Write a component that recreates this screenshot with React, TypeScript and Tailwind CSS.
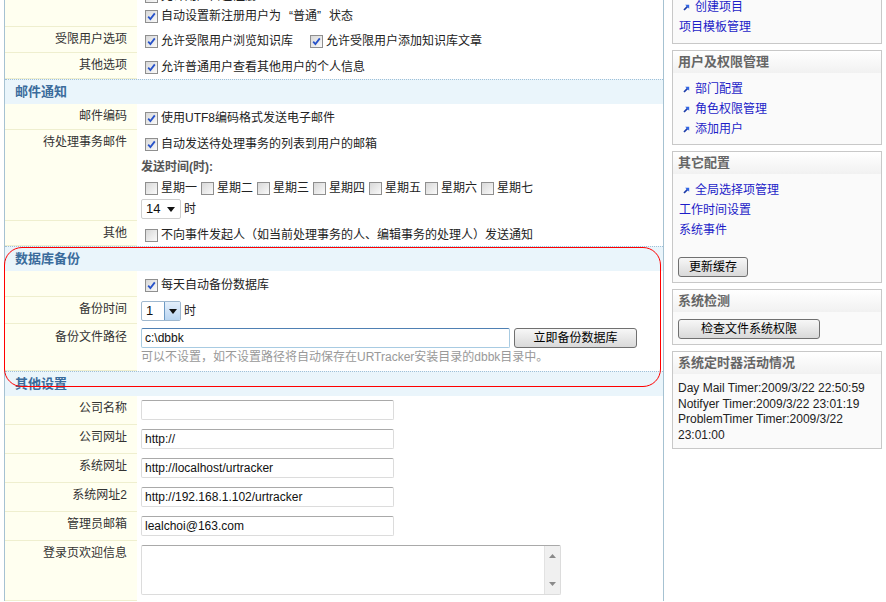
import React from 'react';

const Check = ({ checked }: { checked?: boolean }) => (
  <span className="inline-flex w-[13px] h-[13px] shrink-0 items-center justify-center border border-[#8f8f8f] bg-linear-to-br from-[#d8d8d8] to-[#fafafa]">
    {checked && (
      <svg width="9" height="9" viewBox="0 0 9 9">
        <path d="M1.2 4.6 L3.4 7 L7.8 1.4" fill="none" stroke="#2752c9" strokeWidth="1.8" />
      </svg>
    )}
  </span>
);

const CheckLine = ({ checked, children, className = 'ml-[4px]' }: { checked?: boolean; children: React.ReactNode; className?: string }) => (
  <div className={`flex w-fit items-center gap-[3px] leading-[20px] h-[20px] ${className}`}>
    <Check checked={checked} />
    <span>{children}</span>
  </div>
);

const Row = ({ label, children, valueClass = 'pt-[4px] pb-[2px]', labelPad = 'pt-[3px]' }: { label?: string; children: React.ReactNode; valueClass?: string; labelPad?: string }) => (
  <div className="flex">
    <div className={`w-[132px] shrink-0 bg-[#fffff0] border-b border-[#efefcf] text-right pr-[10px] leading-[19px] text-[#333] ${labelPad}`}>{label}</div>
    <div className={`flex-1 pl-[4px] ${valueClass}`}>{children}</div>
  </div>
);

const Section = ({ title }: { title: string }) => (
  <div className="h-[25px] border-t border-dotted border-[#9fc0d8] bg-[#eaf5fb] pl-[10px] flex items-center font-bold text-[13px] text-[#3b6c9c]">{title}</div>
);

const TextBox = ({ value = '', w = 'w-[253px]' }: { value?: string; w?: string }) => (
  <input
    readOnly
    value={value}
    className={`${w} h-[20px] block rounded-[2px] border border-[#dcdcdc] border-t-[#a9a9a9] px-[3px] text-[12px] text-[#111] outline-none font-['Liberation_Sans',sans-serif]`}
  />
);

const Btn = ({ children, w }: { children: React.ReactNode; w: string }) => (
  <button className={`${w} h-[20px] block rounded-[3px] border border-[#707070] bg-linear-to-b from-[#f7f7f7] to-[#d9d9d9] text-[12px] leading-[18px] text-black`}>{children}</button>
);

const Bullet = () => (
  <svg width="7" height="7" viewBox="0 0 7 7" className="shrink-0">
    <path d="M1 6 L4.6 2.4" stroke="#1b3aa8" strokeWidth="1.7" />
    <path d="M2.2 0.8 H6.2 V4.8 Z" fill="#2e64e6" />
  </svg>
);

const Link = ({ bullet, children }: { bullet?: boolean; children: React.ReactNode }) => (
  <div className={`flex items-center h-[20px] leading-[20px] text-[#1d1dc8] ${bullet ? 'pl-[10px] gap-[5px]' : 'pl-[6px]'}`}>
    {bullet && <Bullet />}
    <span>{children}</span>
  </div>
);

const Panel = ({ title, children, bodyClass = 'pt-[6px] pb-[5px]' }: { title?: string; children: React.ReactNode; bodyClass?: string }) => (
  <div className="border border-[#c8c8c8] bg-[#fafafa]">
    {title && (
      <div className="h-[22px] flex items-center pl-[5px] bg-linear-to-b from-white to-[#f1f1f1] font-bold text-[13px] text-[#666]">{title}</div>
    )}
    <div className={bodyClass}>{children}</div>
  </div>
);

const weekdays = ['星期一', '星期二', '星期三', '星期四', '星期五', '星期六', '星期七'];

export default function App() {
  return (
    <div className="relative h-[602px] w-[886px] overflow-hidden bg-white text-[12px] text-[#222] font-['Liberation_Sans','Noto_Sans_CJK_SC',sans-serif]">
      <div className="flex pl-[4px]">
        <div className="w-[660px] shrink-0 border-l border-r border-[#a6c2d2] -mt-[17px]">
          <Row label="" valueClass="pt-[3px] pb-[1px]">
            <CheckLine>允许用户自己注册</CheckLine>
            <CheckLine checked>
              自动设置新注册用户为<span className="inline-block w-[12px] text-right">“</span>普通<span className="inline-block w-[12px] text-left">”</span>状态
            </CheckLine>
          </Row>
          <Row label="受限用户选项">
            <div className="flex">
              <CheckLine checked>允许受限用户浏览知识库</CheckLine>
              <CheckLine checked className="ml-[17px]">允许受限用户添加知识库文章</CheckLine>
            </div>
          </Row>
          <Row label="其他选项">
            <CheckLine checked>允许普通用户查看其他用户的个人信息</CheckLine>
          </Row>
          <Section title="邮件通知" />
          <Row label="邮件编码">
            <CheckLine checked>使用UTF8编码格式发送电子邮件</CheckLine>
          </Row>
          <Row label="待处理事务邮件" valueClass="pt-[4px] pb-[2px]">
            <CheckLine checked>自动发送待处理事务的列表到用户的邮箱</CheckLine>
            <div className="mt-[3px] leading-[21px] font-bold text-[#555]">发送时间(时):</div>
            <div className="ml-[4px] flex gap-[4px]">
              {weekdays.map(d => (
                <CheckLine key={d} className="">{d}</CheckLine>
              ))}
            </div>
            <div className="mt-[1px] flex items-center gap-[3px]">
              <div className="w-[40px] h-[20px] rounded-[2px] border border-[#cfcfcf] flex items-center justify-between pl-[4px] pr-[5px] font-['Liberation_Sans',sans-serif] text-[13px] text-[#111]">
                <span>14</span>
                <svg width="8" height="5" viewBox="0 0 8 5"><path d="M0 0 H8 L4 5 Z" fill="#111" /></svg>
              </div>
              <span>时</span>
            </div>
          </Row>
          <Row label="其他" valueClass="pt-[4px] pb-[1px]">
            <CheckLine>不向事件发起人（如当前处理事务的人、编辑事务的处理人）发送通知</CheckLine>
          </Row>
          <Section title="数据库备份" />
          <Row label="">
            <CheckLine checked>每天自动备份数据库</CheckLine>
          </Row>
          <Row label="备份时间" valueClass="pt-[4px] pb-[3px]">
            <div className="flex items-center gap-[3px]">
              <div className="w-[40px] h-[20px] flex border border-[#9fb8cf] rounded-[2px] overflow-hidden">
                <span className="flex-1 pl-[4px] leading-[18px] font-['Liberation_Sans',sans-serif] text-[13px] text-[#111]">1</span>
                <span className="w-[16px] flex items-center justify-center border-l border-[#6d9ac4] bg-linear-to-b from-[#e4effb] to-[#b9d5f1]">
                  <svg width="8" height="5" viewBox="0 0 8 5"><path d="M0 0 H8 L4 5 Z" fill="#111" /></svg>
                </span>
              </div>
              <span>时</span>
            </div>
          </Row>
          <Row label="备份文件路径" valueClass="pt-[4px] pb-[5px]" labelPad="pt-[4px]">
            <div className="flex items-center gap-[4px]">
              <input
                readOnly
                value="c:\dbbk"
                className="w-[369px] h-[20px] block rounded-[2px] border border-[#a8cbe2] border-t-[#4f80b3] px-[3px] text-[12px] text-[#111] outline-none font-['Liberation_Sans',sans-serif]"
              />
              <Btn w="w-[123px]">立即备份数据库</Btn>
            </div>
            <div className="leading-[18px] text-[#999]">可以不设置，如不设置路径将自动保存在URTracker安装目录的dbbk目录中。</div>
          </Row>
          <Section title="其他设置" />
          {[
            ['公司名称', ''],
            ['公司网址', 'http://'],
            ['系统网址', 'http://localhost/urtracker'],
            ['系统网址2', 'http://192.168.1.102/urtracker'],
            ['管理员邮箱', 'lealchoi@163.com'],
          ].map(([l, v]) => (
            <Row key={l} label={l} valueClass="pt-[4px] pb-[5px]">
              <TextBox value={v} />
            </Row>
          ))}
          <Row label="登录页欢迎信息" valueClass="pt-[4px] pb-[6px]">
            <div className="w-[420px] h-[50px] flex rounded-[2px] border border-[#dcdcdc] border-t-[#a9a9a9]">
              <div className="flex-1" />
              <div className="w-[16px] bg-[#f0f0f0] border-l border-[#e2e2e2] flex flex-col items-center justify-between py-[8px]">
                <svg width="7" height="4" viewBox="0 0 7 4"><path d="M0 4 H7 L3.5 0 Z" fill="#8a8a8a" /></svg>
                <svg width="7" height="4" viewBox="0 0 7 4"><path d="M0 0 H7 L3.5 4 Z" fill="#8a8a8a" /></svg>
              </div>
            </div>
          </Row>
        </div>

        <div className="w-[210px] shrink-0 ml-[8px] flex flex-col gap-[6px] -mt-[24px]">
          <Panel bodyClass="pt-[0px] pb-[6px]">
            <Link bullet>项目管理</Link>
            <Link bullet>创建项目</Link>
            <Link>项目模板管理</Link>
          </Panel>
          <Panel title="用户及权限管理">
            <Link bullet>部门配置</Link>
            <Link bullet>角色权限管理</Link>
            <Link bullet>添加用户</Link>
          </Panel>
          <Panel title="其它配置" bodyClass="pt-[6px] pb-[5px]">
            <Link bullet>全局选择项管理</Link>
            <Link>工作时间设置</Link>
            <Link>系统事件</Link>
            <div className="pl-[5px] mt-[17px]">
              <Btn w="w-[70px]">更新缓存</Btn>
            </div>
          </Panel>
          <Panel title="系统检测" bodyClass="pt-[7px] pb-[5px] pl-[5px]">
            <Btn w="w-[142px]">检查文件系统权限</Btn>
          </Panel>
          <Panel title="系统定时器活动情况" bodyClass="pt-[7px] pb-[5px] pl-[5px] pr-[4px] leading-[15.5px] text-[#222] font-['Liberation_Sans',sans-serif]">
            <div>Day Mail Timer:2009/3/22 22:50:59</div>
            <div>Notifyer Timer:2009/3/22 23:01:19</div>
            <div>ProblemTimer Timer:2009/3/22 23:01:00</div>
          </Panel>
        </div>
      </div>

      <div className="absolute left-[4px] top-[247px] w-[657px] h-[140px] rounded-[18px] border border-solid border-[#ff0000] pointer-events-none" />
    </div>
  );
}
